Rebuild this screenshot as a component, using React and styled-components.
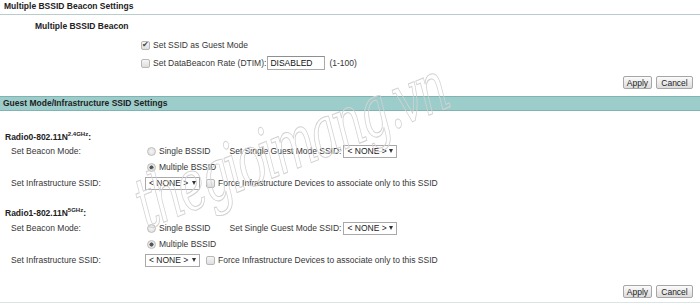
import React from "react";
import styled, { createGlobalStyle } from "styled-components";

const Global = createGlobalStyle`
  html, body { margin: 0; padding: 0; background: #fff; }
  body { font-family: "Liberation Sans", Arial, sans-serif; font-size: 8.5px; color: #363636; }
  * { box-sizing: border-box; }
`;

const Page = styled.div`
  position: relative;
  width: 700px;
  height: 307px;
  overflow: hidden;
`;

const TopTitle = styled.div`
  font-weight: bold;
  color: #222;
  padding: 1px 0 0 4px;
  height: 15px;
  line-height: 10px;
  border-bottom: 1px solid #b8cccc;
`;

const SubTitle = styled.div`
  font-weight: bold;
  color: #222;
  padding: 6px 0 0 35px;
  line-height: 10px;
  height: 23px;
`;

const OptionList = styled.div`
  display: flex;
  flex-direction: column;
  gap: 4px;
  padding-left: 141px;
`;

const Option = styled.div`
  display: flex;
  align-items: center;
  height: 14px;
`;

const Check = styled.span`
  display: inline-block;
  width: 9px;
  height: 9px;
  border: 1px solid #b8b8b8;
  border-radius: 2px;
  background: linear-gradient(#f6f6f6, #dedede);
  margin-right: ${p => p.$mr || 3}px;
  position: relative;
  flex: none;
  &::after {
    content: ${p => (p.$on ? "'\\2714'" : "''")};
    position: absolute;
    left: 0px;
    top: -2px;
    font-size: 8px;
    line-height: 10px;
    color: #444;
  }
`;

const Radio = styled.span`
  display: inline-block;
  width: 9px;
  height: 9px;
  border: 1px solid #bdbdbd;
  border-radius: 50%;
  background: ${p =>
    p.$on
      ? "radial-gradient(circle, #555 0 1.8px, #e6e6e6 2.3px)"
      : "radial-gradient(circle, #f4f4f4 0, #dcdcdc 100%)"};
  margin-right: 3px;
  flex: none;
`;

const TextInput = styled.span`
  display: inline-block;
  width: 58px;
  height: 14px;
  border: 1px solid #a9a9a9;
  border-top-color: #8f8f8f;
  line-height: 12px;
  padding-left: 2px;
  color: #111;
  margin: 0 4px 0 1px;
`;

const ButtonRow = styled.div`
  display: flex;
  justify-content: flex-end;
  gap: 4px;
  padding-right: 7px;
  margin-top: ${p => p.$mt || 0}px;
`;

const Button = styled.span`
  display: inline-flex;
  align-items: center;
  justify-content: center;
  width: ${p => p.$w}px;
  height: 13px;
  border: 1px solid #a6a6a6;
  border-radius: 2px;
  background: linear-gradient(#fbfbfb, #dcdcdc);
  color: #222;
`;

const SectionBar = styled.div`
  margin-top: 7px;
  height: 15px;
  background: #9dcdcb;
  border-top: 1px solid #80b4b2;
  border-bottom: 1px solid #80b4b2;
  font-weight: bold;
  color: #222;
  padding-left: 3px;
  line-height: 13px;
`;

const RadioTitle = styled.div`
  font-weight: bold;
  color: #222;
  padding-left: 5px;
  margin-top: ${p => p.$mt}px;
  height: 12px;
  line-height: 12px;
  sup { font-size: 6px; line-height: 0; vertical-align: 4px; font-weight: bold; }
`;

const Grid = styled.div`
  display: grid;
  grid-template-columns: 134px 1fr;
  grid-auto-rows: 16px;
  align-items: center;
  padding-left: 11px;
  margin-top: ${p => p.$mt || 0}px;
`;

const Label = styled.div`
  color: #363636;
`;

const Cell = styled.div`
  display: flex;
  align-items: center;
  padding-left: ${p => p.$pl || 0}px;
`;

const Select = styled.span`
  display: inline-flex;
  align-items: center;
  justify-content: space-between;
  width: ${p => p.$w || 54}px;
  height: 13px;
  border: 1px solid #a9a9a9;
  padding: 0 3px 0 3px;
  color: #222;
  margin-right: ${p => p.$mr || 0}px;
  &::after {
    content: "";
    border-left: 2.5px solid transparent;
    border-right: 2.5px solid transparent;
    border-top: 4px solid #333;
  }
`;

const Gap = styled.span`
  display: inline-block;
  width: ${p => p.$w}px;
`;

const BottomLine = styled.div`
  margin-top: 4px;
  border-top: 1px solid #dae6e6;
`;

const Watermark = styled.div`
  position: absolute;
  left: 122px;
  top: 168px;
  font-family: "DejaVu Serif", serif;
  font-style: italic;
  font-size: 47px;
  color: transparent;
  -webkit-text-stroke: 0.7px #d2d2d2;
  transform: rotate(-22deg) scale(1, 1.5);
  transform-origin: left top;
  pointer-events: none;
  white-space: nowrap;
  letter-spacing: -3px;
`;

function RadioBlockBody({ gmt }) {
  return (
    <Grid $mt={gmt}>
      <Label>Set Beacon Mode:</Label>
      <Cell $pl={2}>
        <Radio />
        Single BSSID
        <Gap $w={19} />
        Set Single Guest Mode SSID:
        <Gap $w={2} />
        <Select>&lt; NONE &gt;</Select>
      </Cell>
      <div />
      <Cell $pl={2}>
        <Radio $on />
        Multiple BSSID
      </Cell>
      <Label>Set Infrastructure SSID:</Label>
      <Cell>
        <Select $w={55} $mr={6}>&lt; NONE &gt;</Select>
        <Check $mr={3} />
        Force Infrastructure Devices to associate only to this SSID
      </Cell>
    </Grid>
  );
}

export default function App() {
  return (
    <Page>
      <Global />
      <TopTitle>Multiple BSSID Beacon Settings</TopTitle>
      <SubTitle>Multiple BSSID Beacon</SubTitle>
      <OptionList>
        <Option>
          <Check $on />
          Set SSID as Guest Mode
        </Option>
        <Option>
          <Check />
          Set DataBeacon Rate (DTIM):
          <TextInput>DISABLED</TextInput>
          (1-100)
        </Option>
      </OptionList>
      <ButtonRow $mt={6}>
        <Button $w={29}>Apply</Button>
        <Button $w={37}>Cancel</Button>
      </ButtonRow>
      <SectionBar>Guest Mode/Infrastructure SSID Settings</SectionBar>
      <RadioTitle $mt={20}>
        Radio0-802.11N<sup>2.4GHz</sup>:
      </RadioTitle>
      <RadioBlockBody gmt={0} />
      <RadioTitle $mt={16}>
        Radio1-802.11N<sup>5GHz</sup>:
      </RadioTitle>
      <RadioBlockBody gmt={1} />
      <ButtonRow $mt={17}>
        <Button $w={29}>Apply</Button>
        <Button $w={37}>Cancel</Button>
      </ButtonRow>
      <BottomLine />
      <Watermark>thegioimang.vn</Watermark>
    </Page>
  );
}
